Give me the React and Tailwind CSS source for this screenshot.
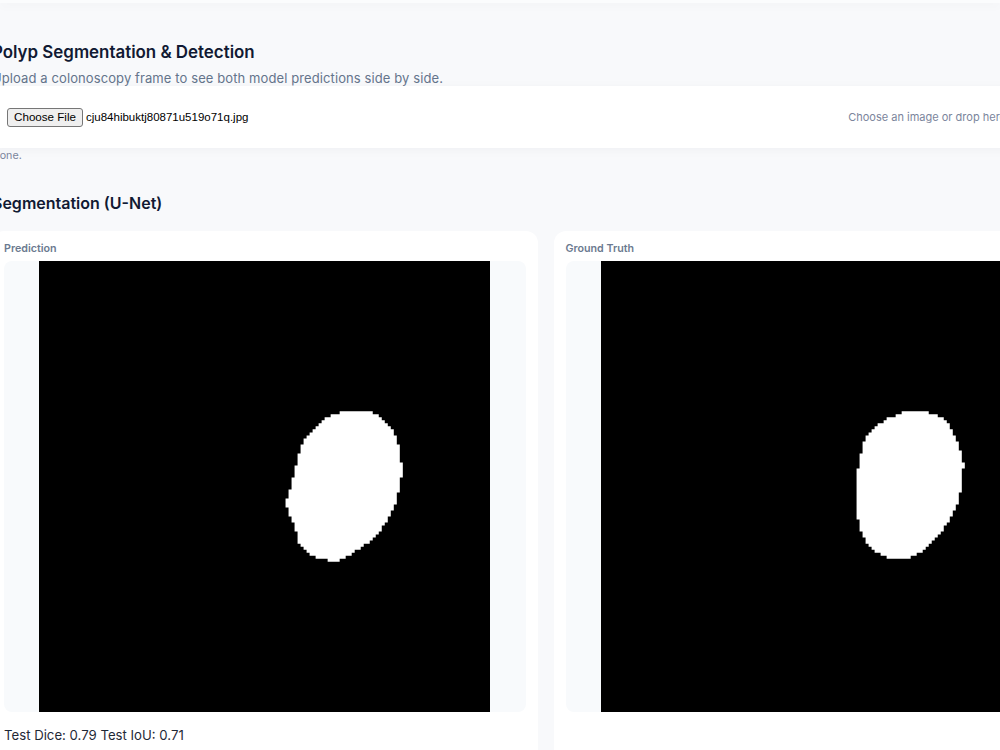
const predictionBlob =
  "222,33 295,33 330,50 360,80 380,115 392,160 396,220 388,270 370,330 345,375 310,415 270,445 235,470 200,484 155,478 105,455 85,430 78,390 60,350 46,310 55,280 70,235 85,170 97,125 125,90 160,60 190,45";
const truthBlob =
  "197,33 255,36 285,45 320,58 335,90 355,125 365,170 372,192 365,240 358,300 335,350 310,390 285,420 255,450 215,472 155,481 120,462 90,440 62,400 50,340 47,285 53,210 62,160 78,110 100,90 130,62 165,48";

const GRID = 150;

function smooth(points) {
  return points.flatMap(([x, y], i) => {
    const [nx, ny] = points[(i + 1) % points.length];
    return [
      [x * 0.75 + nx * 0.25, y * 0.75 + ny * 0.25],
      [x * 0.25 + nx * 0.75, y * 0.25 + ny * 0.75],
    ];
  });
}

function toOutline(points, shift) {
  const scale = GRID / 451;
  const poly = smooth(
    points.split(" ").map((pair) => {
      const [x, y] = pair.split(",").map(Number);
      return [(shift + x / 3) * scale, (139 + y / 3) * scale];
    })
  );
  const right = [];
  const left = [];
  for (let row = 0; row < GRID; row++) {
    const mid = row + 0.5;
    const hits = [];
    poly.forEach(([x, y], i) => {
      const [nx, ny] = poly[(i + 1) % poly.length];
      if (y <= mid !== ny <= mid) hits.push(x + ((mid - y) / (ny - y)) * (nx - x));
    });
    if (hits.length < 2) continue;
    const end = Math.round(Math.max(...hits));
    const start = Math.round(Math.min(...hits));
    right.push(`${end},${row}`, `${end},${row + 1}`);
    left.unshift(`${start},${row + 1}`, `${start},${row}`);
  }
  return [...right, ...left].join(" ");
}

function Mask({ points, shift }) {
  return (
    <div className="flex h-[451px] justify-center rounded-lg bg-[#f8fafc]">
      <svg viewBox={`0 0 ${GRID} ${GRID}`} className="h-[451px] w-[451px] bg-black">
        <polygon points={toOutline(points, shift)} fill="#fff" />
      </svg>
    </div>
  );
}

function ResultCard({ title, points, shift, children }) {
  return (
    <div className="flex-1 rounded-xl bg-white px-3 pt-[11px]">
      <div className="mb-[6px] text-[10.7px] leading-[13px] font-semibold text-[#6b7a90]">{title}</div>
      <Mask points={points} shift={shift} />
      {children}
    </div>
  );
}

export default function App() {
  return (
    <div className="h-[750px] overflow-hidden bg-[#f8f9fb] font-['Inter',sans-serif]">
      <div className="h-[3px] bg-[#fbfcfd] shadow-[0_2px_10px_rgba(15,23,42,0.05)]" />
      <div className="-ml-2 w-[1107px]">
        <h1 className="mt-[39px] text-[16.9px] leading-[21px] font-semibold text-[#111a33]">
          Polyp Segmentation &amp; Detection
        </h1>
        <p className="mt-[5px] text-[13px] leading-5 tracking-[0.1px] text-[#64748b]">
          Upload a colonoscopy frame to see both model predictions side by side.
        </p>
        <div className="-mt-[2px] flex h-[62px] items-center justify-between bg-white pr-[93px] pl-[15px] shadow-[0_2px_10px_rgba(15,23,42,0.04)]">
          <div className="flex items-center gap-[3px] font-['Liberation_Sans',sans-serif] text-[11.5px] text-black">
            <button className="h-[19px] w-[76px] rounded-[3px] border border-[#767676] bg-[#efefef] text-[11.6px] leading-none">
              Choose File
            </button>
            <span className="pt-px">cju84hibuktj80871u519o71q.jpg</span>
          </div>
          <span className="text-[11px] text-[#7b859c]">Choose an image or drop here</span>
        </div>
        <div className="mt-[1px] text-[10.7px] leading-[14px] text-[#7b859c]">Done.</div>
        <h2 className="mt-[30px] text-base leading-[20px] font-semibold text-[#111a33]">Segmentation (U-Net)</h2>
        <div className="mt-[18px] flex gap-4">
          <ResultCard title="Prediction" points={predictionBlob} shift={231}>
            <p className="mt-[13px] text-[13.2px] leading-5 text-[#1f2937]">Test Dice: 0.79 Test IoU: 0.71</p>
            <div className="h-[40px]" />
          </ResultCard>
          <ResultCard title="Ground Truth" points={truthBlob} shift={239} />
        </div>
      </div>
    </div>
  );
}
